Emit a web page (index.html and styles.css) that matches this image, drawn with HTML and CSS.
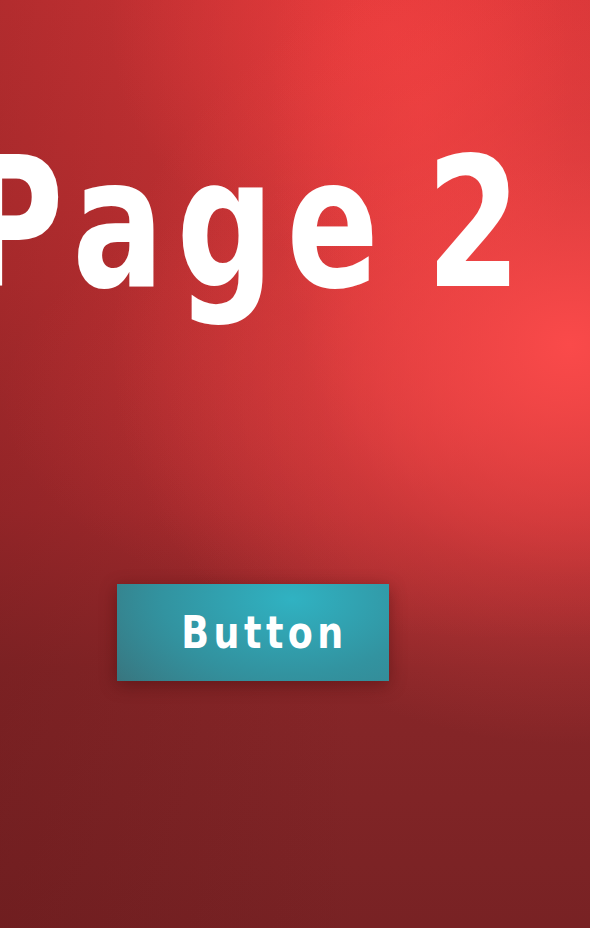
FILE: index.html
```html
<!DOCTYPE html>
<html lang="en">
<head>
<meta charset="utf-8">
<title>Page 2</title>
<link rel="stylesheet" href="styles.css">
</head>
<body>
<main class="page">
  <h1 class="title">Page 2</h1>
  <div class="actions">
    <button class="btn" type="button"><span class="btn-label">Button</span></button>
  </div>
</main>
</body>
</html>
```

FILE: styles.css
```css
html, body {
  margin: 0;
  padding: 0;
  height: 100%;
}
body {
  overflow: hidden;
  background:
    radial-gradient(ellipse 460px 400px at 570px 345px, rgba(250, 74, 74, 1) 0%, rgba(250, 74, 74, 0.7) 22%, rgba(250, 74, 74, 0.28) 58%, rgba(250, 74, 74, 0) 100%),
    radial-gradient(ellipse 520px 240px at 520px 400px, rgba(236, 64, 64, 0.45) 0%, rgba(236, 64, 64, 0) 100%),
    radial-gradient(ellipse 150px 380px at 420px 110px, rgba(240, 64, 64, 0.55) 0%, rgba(240, 64, 64, 0) 100%),
    radial-gradient(ellipse 280px 240px at 390px 30px, rgba(238, 62, 62, 0.7) 0%, rgba(238, 62, 62, 0) 100%),
    linear-gradient(to right, rgba(90, 20, 22, 0.28) 0%, rgba(90, 20, 22, 0) 60%),
    linear-gradient(to bottom, #d43537 0%, #c23133 30%, #a82b2e 55%, #882628 72%, #782224 100%);
}
.page {
  height: 928px;
  display: flex;
  flex-direction: column;
}
.title {
  margin: 0 0 0 -36px;
  padding-top: 124px;
  font-family: "DejaVu Sans Condensed", "DejaVu Sans", sans-serif;
  font-weight: 700;
  font-size: 180px;
  line-height: 200px;
  letter-spacing: 15px;
  word-spacing: -30px;
  color: #ffffff;
  white-space: nowrap;
  transform: scaleX(0.84);
  transform-origin: left top;
}
.actions {
  padding-top: 260px;
  padding-left: 117px;
  display: flex;
}
.btn {
  width: 272px;
  height: 97px;
  border: 0;
  padding: 0 0 0 24px;
  margin: 0;
  font-family: "DejaVu Sans Condensed", "DejaVu Sans", sans-serif;
  font-weight: 700;
  font-size: 45px;
  color: #ffffff;
  background:
    radial-gradient(ellipse 260px 150px at 175px 15px, #30b2c2 0%, #3293a0 50%, rgba(58, 110, 118, 0) 100%),
    linear-gradient(to right, #3b6a72, #37818c);
  box-shadow: 0 4px 16px rgba(60, 10, 10, 0.45);
}
.btn-label {
  display: inline-block;
  letter-spacing: 5px;
  transform: scaleX(0.9);
}
```
